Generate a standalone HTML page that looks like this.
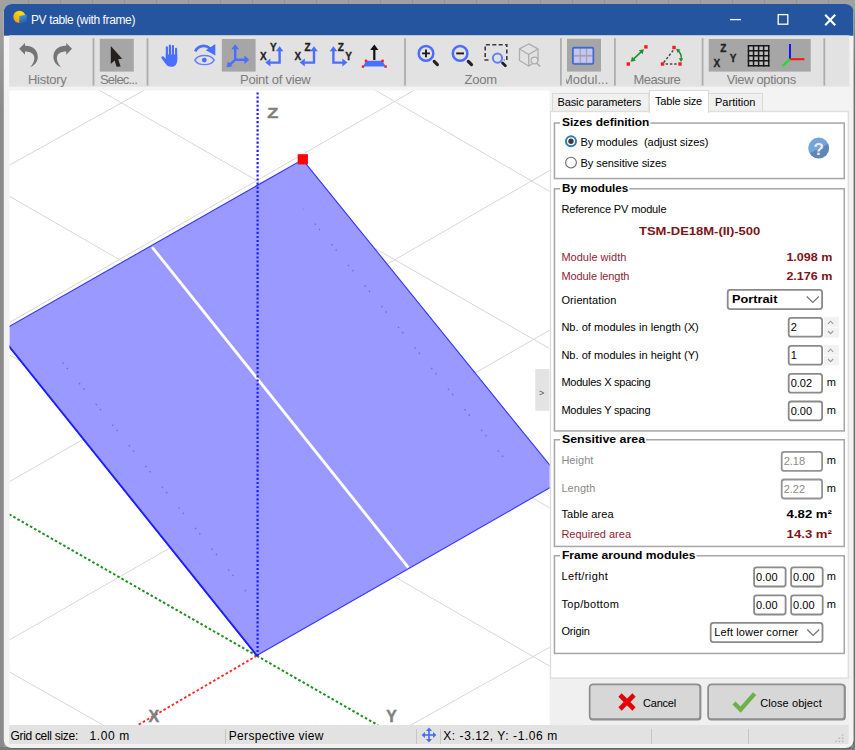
<!DOCTYPE html>
<html><head><meta charset="utf-8"><title>PV table (with frame)</title><style>
html,body{margin:0;padding:0;}
body{width:855px;height:750px;overflow:hidden;position:relative;background-color:#a1a1a1;
 background-image:linear-gradient(to right,transparent 0,transparent 28px,#939393 28px,#939393 29px,transparent 29px),
                  linear-gradient(to bottom,transparent 0,transparent 27px,#939393 27px,#939393 28px,transparent 28px);
 background-size:32.01px 100%,100% 20.53px;background-position:0 0,0 0;
 font-family:"Liberation Sans",sans-serif;}
.t{position:absolute;white-space:nowrap;line-height:1;}
svg{position:absolute;overflow:visible;}
</style></head><body>
<svg id="bg" style="left:0;top:0" width="855" height="750" viewBox="0 0 855 750">
<defs><linearGradient id="gl" x1="0" y1="0" x2="0" y2="1"><stop offset="0.03" stop-color="#000" stop-opacity="0"/><stop offset="0.15" stop-color="#000" stop-opacity=".14"/></linearGradient><linearGradient id="gr" x1="0" y1="0" x2="0" y2="1"><stop offset="0.015" stop-color="#000" stop-opacity="0"/><stop offset="0.095" stop-color="#000" stop-opacity=".25"/></linearGradient><linearGradient id="gh" x1="0.25" y1="0" x2="0.75" y2="1"><stop offset="0.52" stop-color="#74a4da"/><stop offset="0.52" stop-color="#5f87b6"/></linearGradient><clipPath id="wclip"><rect x="3.8" y="4" width="849.8" height="744.1" rx="8"/></clipPath></defs>
<rect x="0" y="0" width="4" height="750" fill="url(#gl)"/>
<rect x="853" y="0" width="2" height="750" fill="url(#gr)"/>
<rect x="0" y="747" width="855" height="3" fill="#7c7c7c"/>
<rect x="4.6" y="5" width="849.8" height="744.1" rx="8" fill="#000" opacity=".18"/>
<rect x="3.8" y="4" width="849.8" height="744.1" fill="#f3f3f3" rx="8"/>
<rect x="3.8" y="4" width="849.8" height="31.7" fill="#25559e" clip-path="url(#wclip)"/>
<rect x="9.2" y="35.3" width="840.2" height="51.3" fill="#e2e2e2"/>
<rect x="550" y="679" width="299" height="46" fill="#f0f0f0"/>
<rect x="9" y="725" width="839.7" height="19" fill="#e2e2e2"/>
<rect x="92.6" y="38.2" width="1.8" height="47.4" fill="#adadad"/>
<rect x="146.6" y="38.2" width="1.8" height="47.4" fill="#adadad"/>
<rect x="404.1" y="38.2" width="1.8" height="47.4" fill="#adadad"/>
<rect x="560" y="38.2" width="1.8" height="47.4" fill="#adadad"/>
<rect x="614" y="38.2" width="1.8" height="47.4" fill="#adadad"/>
<rect x="701.7" y="38.2" width="1.8" height="47.4" fill="#adadad"/>
<rect x="823.4" y="38.2" width="1.8" height="47.4" fill="#adadad"/>
<rect x="99.8" y="38.8" width="34" height="32.8" fill="#a6a6a6"/>
<rect x="221.8" y="39" width="33.8" height="32.6" fill="#a6a6a6"/>
<rect x="567" y="38.8" width="34" height="32.8" fill="#a6a6a6"/>
<rect x="708.7" y="39" width="102" height="32.6" fill="#a6a6a6"/>
<rect x="552.5" y="93.5" width="96.5" height="18" fill="#f0f0f0" stroke="#d9d9d9" stroke-width="1"/>
<rect x="708.5" y="93.5" width="54" height="18" fill="#f0f0f0" stroke="#d9d9d9" stroke-width="1"/>
<rect x="550.5" y="111.5" width="297.8" height="566.6" fill="#fff" stroke="#dedede" stroke-width="1.4"/>
<rect x="649.5" y="90.5" width="59" height="22" fill="#fff" stroke="#d9d9d9" stroke-width="1"/>
<rect x="650" y="110.5" width="58" height="3" fill="#fff"/>
<rect x="554.45" y="123.05" width="289.8" height="55.5" fill="none" stroke="#a6a6a6" stroke-width="1.5"/>
<rect x="560" y="118.3" width="90.4" height="8" fill="#fff"/>
<rect x="554.45" y="188.75" width="289.8" height="242.2" fill="none" stroke="#a6a6a6" stroke-width="1.5"/>
<rect x="560" y="184" width="69.4" height="8" fill="#fff"/>
<rect x="554.45" y="439.75" width="289.8" height="106.7" fill="none" stroke="#a6a6a6" stroke-width="1.5"/>
<rect x="560" y="435" width="86" height="8" fill="#fff"/>
<rect x="554.45" y="555.75" width="289.8" height="97.7" fill="none" stroke="#a6a6a6" stroke-width="1.5"/>
<rect x="560" y="551" width="136.5" height="8" fill="#fff"/>
<circle cx="571" cy="141.2" r="5" fill="#fff" stroke="#2f7ab8" stroke-width="2"/>
<circle cx="571" cy="141.2" r="2.7" fill="#3c3c3c"/>
<circle cx="571" cy="162.6" r="5.4" fill="#fff" stroke="#6a6a6a" stroke-width="1.1"/>
<circle cx="818.7" cy="148.1" r="10.5" fill="url(#gh)"/>
<rect x="727.7" y="289.9" width="94.4" height="19.2" fill="#fff" stroke="#8a8a8a" stroke-width="1.8" rx="2.5"/>
<path d="M806.8 296.5 l6 6 l6 -6" fill="none" stroke="#707070" stroke-width="1.1"/>
<rect x="788.7" y="317.9" width="33.4" height="18.8" fill="#fff" stroke="#8a8a8a" stroke-width="1.8" rx="2.5"/>
<rect x="788.7" y="345.9" width="33.4" height="18.8" fill="#fff" stroke="#8a8a8a" stroke-width="1.8" rx="2.5"/>
<rect x="824" y="317" width="15" height="10" fill="#f2f2f2"/>
<rect x="824" y="327.6" width="15" height="10" fill="#f2f2f2"/>
<path d="M828 323.8 l2.6 -2.6 l2.6 2.6 M828 331 l2.6 2.6 l2.6 -2.6" fill="none" stroke="#9a9a9a" stroke-width="1.1"/>
<rect x="824" y="345" width="15" height="10" fill="#f2f2f2"/>
<rect x="824" y="355.6" width="15" height="10" fill="#f2f2f2"/>
<path d="M828 351.8 l2.6 -2.6 l2.6 2.6 M828 359 l2.6 2.6 l2.6 -2.6" fill="none" stroke="#9a9a9a" stroke-width="1.1"/>
<rect x="788.7" y="373.9" width="33.4" height="18.8" fill="#fff" stroke="#8a8a8a" stroke-width="1.8" rx="2.5"/>
<rect x="788.7" y="401.5" width="33.4" height="18.8" fill="#fff" stroke="#8a8a8a" stroke-width="1.8" rx="2.5"/>
<rect x="781.7" y="451.9" width="40.4" height="19" fill="#fff" stroke="#939393" stroke-width="1.8" rx="2.5"/>
<rect x="781.7" y="479.5" width="40.4" height="19" fill="#fff" stroke="#939393" stroke-width="1.8" rx="2.5"/>
<rect x="754.1" y="567.3" width="31.5" height="19.2" fill="#fff" stroke="#8a8a8a" stroke-width="1.8" rx="2.5"/>
<rect x="791.1" y="567.3" width="31.6" height="19.2" fill="#fff" stroke="#8a8a8a" stroke-width="1.8" rx="2.5"/>
<rect x="754.1" y="595.3" width="31.5" height="19.2" fill="#fff" stroke="#8a8a8a" stroke-width="1.8" rx="2.5"/>
<rect x="791.1" y="595.3" width="31.6" height="19.2" fill="#fff" stroke="#8a8a8a" stroke-width="1.8" rx="2.5"/>
<rect x="710.7" y="622.9" width="111.8" height="19.2" fill="#fff" stroke="#8a8a8a" stroke-width="1.8" rx="2.5"/>
<path d="M807.2 629.5 l6 6 l6 -6" fill="none" stroke="#707070" stroke-width="1.1"/>
<rect x="589.2" y="684.1" width="112.2" height="36.4" fill="#8c8c8c" rx="3.5"/>
<rect x="589.65" y="684.45" width="110.5" height="34.7" fill="#d7d7d7" stroke="#8e8e8e" stroke-width="1.7" rx="3.5"/>
<rect x="707.7" y="684.1" width="138.1" height="36.4" fill="#8c8c8c" rx="3.5"/>
<rect x="708.15" y="684.45" width="136.4" height="34.7" fill="#d7d7d7" stroke="#8e8e8e" stroke-width="1.7" rx="3.5"/>
<path d="M620 695 L634 709 M634 695 L620 709" stroke="#e40000" stroke-width="4.6" fill="none"/>
<path d="M734 703 L740.6 709.6 L754.6 693.6" stroke="#6db248" stroke-width="4.4" fill="none"/>
<rect x="225" y="729" width="1" height="15" fill="#c6c6c6"/>
<rect x="416" y="729" width="1" height="15" fill="#c6c6c6"/>
<rect x="440" y="729" width="1" height="15" fill="#c6c6c6"/>
<rect x="651" y="729" width="1" height="15" fill="#c6c6c6"/>
<rect x="748" y="729" width="1" height="15" fill="#c6c6c6"/>
</svg>
<svg id="cv" style="left:9px;top:90px;overflow:hidden" width="541" height="635" viewBox="9 90 541 635">
<rect x="9.6" y="90.5" width="540" height="634.5" fill="#fff"/>
<clipPath id="cvclip"><rect x="9.6" y="90.5" width="540" height="634.5"/></clipPath>
<g clip-path="url(#cvclip)">
<g stroke="#d6d6d6" stroke-width="1" fill="none">
<path d="M368 86 L550 191.7"/>
<path d="M92 86 L549.3 348.4"/>
<path d="M9 196 L550 508"/>
<path d="M9 354.5 L553 668"/>
<path d="M9 671.7 L104 725.6"/>
<path d="M9 165.4 L150 87"/>
<path d="M9 322.8 L420 86.9"/>
<path d="M9 482 L550 170.3"/>
<path d="M9 640.2 L550 330"/>
<path d="M553 645.4 L410 725.5"/>
</g>
<path d="M256.8 655.8 L9 514.2" stroke="#1f8f1f" stroke-width="2" stroke-dasharray="2.6 2.19" fill="none"/>
<path d="M256.8 655.8 L378 725.2" stroke="#1f8f1f" stroke-width="2" stroke-dasharray="2.6 2.19" fill="none"/>
<path d="M256.8 655.8 L138 725" stroke="#ff2a2a" stroke-width="1.9" stroke-dasharray="2.6 2.19" fill="none"/>
<polygon points="302.6,159.6 562.3,480.7 256.8,655.5 -1.8,332.8" fill="#9999ff" stroke="#3535ff" stroke-width="1.1"/>
<path d="M256.8 655.5 L-1.8 332.8" stroke="#1f1fff" stroke-width="1.9" fill="none"/>
<path d="M152 247 L408.4 567.6" stroke="#fff" stroke-width="2.8" fill="none"/>
<path d="M503.1 456.9 L303 209" stroke="#4a4aff" stroke-width="1.3" stroke-dasharray="1.5 5.3 1.5 18.2" fill="none" opacity=".6"/>
<path d="M62.6 362.5 L248.5 594.6" stroke="#4a4aff" stroke-width="1.3" stroke-dasharray="1.5 5.3 1.5 18.2" fill="none" opacity=".6"/>
<path d="M257.6 92.4 L257.6 656" stroke="#1d1dff" stroke-width="2.2" stroke-dasharray="2.1 2" fill="none"/>
<rect x="297.7" y="154.2" width="10.2" height="10.2" fill="#ff0000"/>
<text transform="translate(267.3,118) scale(1.18,0.96)" font-family="Liberation Sans, sans-serif" font-weight="bold" font-size="15.4" fill="#808080" stroke="#808080" stroke-width=".4">Z</text>
<text transform="translate(148.6,721.7) scale(1.02,1)" font-family="Liberation Sans, sans-serif" font-weight="bold" font-size="15.8" fill="#808080" stroke="#808080" stroke-width=".4">X</text>
<text transform="translate(386.3,721.7) scale(1,1)" font-family="Liberation Sans, sans-serif" font-weight="bold" font-size="15.8" fill="#808080" stroke="#808080" stroke-width=".4">Y</text>
</g>
<rect x="535.3" y="369" width="14.2" height="41.8" fill="#e3e3e3"/>
</svg>

<svg id="ic" style="left:0;top:0;pointer-events:none" width="855" height="750" viewBox="0 0 855 750">
<!-- title icon -->
<linearGradient id="sun" x1="0.8" y1="0.1" x2="0.2" y2="0.95"><stop offset="0.2" stop-color="#ffd60a"/><stop offset="1" stop-color="#f79b10"/></linearGradient>
<linearGradient id="pan" x1="0.3" y1="0" x2="0.7" y2="1"><stop offset="0" stop-color="#3f9fe0"/><stop offset="0.75" stop-color="#2a6ab4"/><stop offset="1" stop-color="#265aa4"/></linearGradient>
<circle cx="19.4" cy="16.9" r="6.1" fill="url(#sun)"/>
<path d="M19.2 16 L26.9 14.6 L26.9 21.8 L19.2 23.2 Z" fill="url(#pan)"/>
<!-- window controls -->
<path d="M730 19.6 H741" stroke="#fff" stroke-width="1.3"/>
<rect x="778.2" y="14.6" width="9.6" height="9.6" fill="none" stroke="#fff" stroke-width="1.3"/>
<path d="M825.2 14.8 L835.2 25.2 M835.2 14.8 L825.2 25.2" stroke="#fff" stroke-width="2.1"/>
<!-- history -->
<path d="M19.2 48.8 L25 43 L25 45.7 C32.5 45.5 38 50 37.8 57 C37.6 62 34.5 65.6 30 67.3 C33.4 63.8 34.8 60.2 34.2 57 C33.5 53.4 30.5 51.7 25 51.6 L25 54.8 Z" fill="#757575"/>
<path d="M19.2 48.8 L25 43 L25 45.7 C32.5 45.5 38 50 37.8 57 C37.6 62 34.5 65.6 30 67.3 C33.4 63.8 34.8 60.2 34.2 57 C33.5 53.4 30.5 51.7 25 51.6 L25 54.8 Z" fill="#757575" transform="translate(91.2,0) scale(-1,1)"/>
<!-- select cursor -->
<path d="M110.8 46 L110.8 64 L114.6 60.6 L116.6 66.8 L120.6 66.4 L118.2 59.2 L122.2 58.8 Z" fill="#25221d"/>
<!-- hand -->
<g fill="#4a6eff">
<rect x="165.8" y="46.2" width="2.2" height="13" rx="1.1"/>
<rect x="168.8" y="44.4" width="2.2" height="15" rx="1.1"/>
<rect x="171.8" y="45" width="2.2" height="15" rx="1.1"/>
<rect x="175" y="47.8" width="2.2" height="13" rx="1.1"/>
<path d="M165.8 54.6 H177.2 V60 C177.2 64.8 174.6 66.8 171.4 66.8 C168.4 66.8 166.8 65.6 165.2 63.2 L161.5 58.2 C160.8 56.8 162.6 55.6 163.8 56.8 L165.8 59 Z"/>
</g>
<!-- eye / rotate -->
<g fill="none" stroke="#4a6eff">
<path d="M194.8 60.1 C198.4 54 210.6 54 214.2 60.1 C210.6 66.2 198.4 66.2 194.8 60.1 Z" stroke-width="1.4" stroke-opacity=".85"/>
<path d="M195.2 51.4 C198 45.2 205.6 44.4 210 48.6" stroke-width="2.7"/>
</g>
<circle cx="204.3" cy="60.1" r="2.4" fill="#4a6eff"/>
<path d="M215.3 44.1 L215.3 55.6 L205.9 50.3 Z" fill="#4a6eff"/>
<!-- 3d axes -->
<g stroke="#4a6eff" stroke-width="2.4" fill="none">
<path d="M235.2 48 V59.8 H245.5 M235.2 59.8 L229.5 64.8"/>
</g>
<g fill="#4a6eff">
<path d="M235.2 44.2 L239 49.2 H231.4 Z"/>
<path d="M249.2 59.8 L244.4 55.6 V64 Z"/>
<path d="M226.6 67.2 L228 61.6 L232.6 66.2 Z"/>
</g>
<!-- XY -->
<g>
<path d="M279.6 50 V62.6 H270" stroke="#4a6eff" stroke-width="2.4" fill="none"/>
<path d="M279.6 46.2 L283.4 51.2 H275.8 Z" fill="#4a6eff"/>
<path d="M265.3 62.6 L270.4 58.6 V66.6 Z" fill="#4a6eff"/>
</g>
<g transform="translate(34.4,0)">
<path d="M279.6 50 V62.6 H270" stroke="#4a6eff" stroke-width="2.4" fill="none"/>
<path d="M279.6 46.2 L283.4 51.2 H275.8 Z" fill="#4a6eff"/>
<path d="M265.3 62.6 L270.4 58.6 V66.6 Z" fill="#4a6eff"/>
</g>
<!-- ZY -->
<path d="M333.4 50 V62.6 H343" stroke="#4a6eff" stroke-width="2.4" fill="none"/>
<path d="M333.4 46.2 L337.2 51.2 H329.6 Z" fill="#4a6eff"/>
<path d="M347.4 62.6 L342.4 58.6 V66.6 Z" fill="#4a6eff"/>
<g font-family="Liberation Sans, sans-serif" font-weight="bold" font-size="10" fill="#222" stroke="#222" stroke-width=".3">
<text x="260" y="60">X</text><text x="270" y="51.4">Y</text>
<text x="294.4" y="60">X</text><text x="304.6" y="51.4">Z</text>
<text x="337.8" y="51">Z</text><text x="345.3" y="60.4">Y</text>
<text x="720.2" y="51.8">Z</text><text x="729.8" y="61.8">Y</text><text x="713.4" y="66.8">X</text>
</g>
<!-- top view -->
<path d="M374.3 49 V60" stroke="#111" stroke-width="2.2"/>
<path d="M374.3 44.4 L378.4 50 H370.2 Z" fill="#111"/>
<path d="M366 60.8 H382.6 L385.6 66.6 H363 Z" fill="#4a6eff"/>
<g fill="#ff1a1a"><rect x="364.8" y="59.6" width="2.4" height="2.4"/><rect x="381.4" y="59.6" width="2.4" height="2.4"/><rect x="361.8" y="65.4" width="2.4" height="2.4"/><rect x="384.4" y="65.4" width="2.4" height="2.4"/></g>
<!-- zoom in/out -->
<g fill="none">
<circle cx="426" cy="53.4" r="7.3" stroke="#4c6bff" stroke-width="2.5"/>
<path d="M422.1 53.4 H429.9 M426 49.5 V57.3" stroke="#1c1a17" stroke-width="1.9"/>
<path d="M434.2 61.4 L437.4 64.6" stroke="#26221c" stroke-width="3.2" stroke-linecap="round"/>
<circle cx="460.1" cy="53.4" r="7.3" stroke="#4c6bff" stroke-width="2.5"/>
<path d="M456.2 53.4 H464" stroke="#1c1a17" stroke-width="1.9"/>
<path d="M468.3 61.4 L471.5 64.6" stroke="#26221c" stroke-width="3.2" stroke-linecap="round"/>
<path d="M488.5 60 H485.2 V44.8 H506.8 V60 H503.8" stroke="#3a3a3a" stroke-width="1.6" stroke-dasharray="4 2.4"/>
<circle cx="497.5" cy="58.1" r="4.6" stroke="#5f7dff" stroke-width="2" fill="#e2e2e2"/>
<path d="M502.6 63 L505.4 65.8" stroke="#222" stroke-width="2.8" stroke-linecap="round"/>
</g>
<!-- cube (disabled) -->
<g fill="none" stroke="#adadad" stroke-width="1.3">
<path d="M528.7 43.9 L538 49 V60.5 L528.7 66 L519.5 60.5 V49 Z"/>
<path d="M519.5 49 L528.7 54.5 L538 49 M528.7 54.5 V66"/>
<circle cx="534.5" cy="60.5" r="3.4" fill="#e3e3e3"/>
<path d="M537 63.2 L540 66.4" stroke-width="1.6"/>
</g>
<!-- module -->
<rect x="572.8" y="47.6" width="20.6" height="16.4" rx="1.4" fill="#a6a6a6" stroke="#3a68d8" stroke-width="1.6"/>
<g fill="#c4c4ff">
<rect x="574.1" y="48.9" width="5.5" height="5.9"/><rect x="580.9" y="48.9" width="5" height="5.9"/><rect x="587.2" y="48.9" width="5" height="5.9"/>
<rect x="574.1" y="56.7" width="5.5" height="5.9"/><rect x="580.9" y="56.7" width="5" height="5.9"/><rect x="587.2" y="56.7" width="5" height="5.9"/>
</g>
<!-- measure -->
<g fill="#ff1a1a">
<rect x="644.2" y="45.2" width="3.4" height="3.4"/><rect x="626.6" y="62.3" width="3.4" height="3.4"/>
<rect x="672.3" y="45.8" width="3.4" height="3.4"/><rect x="660.8" y="62.3" width="3.4" height="3.4"/><rect x="678.3" y="62.3" width="3.4" height="3.4"/>
</g>
<path d="M633 59.6 L641.6 51.4" stroke="#1f8f33" stroke-width="1.6"/>
<path d="M630.6 61.8 L632 56.8 L635.8 60.8 Z M644 49.2 L642.6 54.2 L638.8 50.2 Z" fill="#1f8f33"/>
<path d="M673.2 50.4 L663.6 62.6 M665.6 64 H678" stroke="#4a4a4a" stroke-width="1.5" stroke-dasharray="2.4 1.9" fill="none"/>
<path d="M677.4 50.2 C680.4 52.4 681.6 56 681.2 59.4" stroke="#1f8f33" stroke-width="1.5" fill="none"/>
<path d="M676 48.8 L680.4 49.6 L677.6 53 Z M681 62 L678.8 58.2 L683.2 58.6 Z" fill="#1f8f33"/>
<!-- view options -->
<rect x="748.5" y="45.7" width="20.2" height="20.1" fill="#bdbdbd"/>
<g stroke="#161616" stroke-width="1.5" fill="none">
<path d="M748.5 45 V66.5 M753.55 45 V66.5 M758.6 45 V66.5 M763.65 45 V66.5 M768.7 45 V66.5"/>
<path d="M747.8 45.7 H769.4 M747.8 50.7 H769.4 M747.8 55.75 H769.4 M747.8 60.8 H769.4 M747.8 65.8 H769.4"/>
</g>
<path d="M790 44 V59.2" stroke="#1414ff" stroke-width="2"/>
<path d="M790 59.2 H804.4" stroke="#ff1414" stroke-width="2"/>
<path d="M790 59.2 L782.6 66" stroke="#1fe01f" stroke-width="2.3"/>
<!-- status icon -->
<g fill="#4a6cf0" stroke="none">
<path d="M429 727.6 L432 731 H426 Z M429 742.4 L432 739 H426 Z M421.6 735 L425 732 V738 Z M436.4 735 L433 732 V738 Z"/>
<rect x="428.2" y="730" width="1.6" height="10"/><rect x="424" y="734.2" width="10" height="1.6"/>
</g>
<!-- grip -->
<g fill="#bdbdbd">
<rect x="841.8" y="734.2" width="1.6" height="1.6"/>
<rect x="838.6" y="737.4" width="1.6" height="1.6"/><rect x="841.8" y="737.4" width="1.6" height="1.6"/>
<rect x="835.4" y="740.6" width="1.6" height="1.6"/><rect x="838.6" y="740.6" width="1.6" height="1.6"/><rect x="841.8" y="740.6" width="1.6" height="1.6"/>
</g>
</svg>

<div style="position:absolute;left:566px;top:70px;width:44px;height:18px;overflow:hidden;"><span class="t" style="left:-4px;top:3.40px;font-size:13px;color:#7c7c7c;">Modul...</span></div>
<span class="t" id="t1" style="top:73.40px;font-size:13px;color:#7c7c7c;letter-spacing:-0.293px;left:28.00px;">History</span>
<span class="t" id="t2" style="top:73.40px;font-size:13px;color:#7c7c7c;letter-spacing:-0.800px;left:100.00px;">Selec...</span>
<span class="t" id="t3" style="top:73.40px;font-size:13px;color:#7c7c7c;letter-spacing:-0.246px;left:240.00px;">Point of view</span>
<span class="t" id="t4" style="top:73.40px;font-size:13px;color:#7c7c7c;letter-spacing:-0.234px;left:464.50px;">Zoom</span>
<span class="t" id="t5" style="top:73.40px;font-size:13px;color:#7c7c7c;letter-spacing:-0.583px;left:633.60px;">Measure</span>
<span class="t" id="t6" style="top:73.40px;font-size:13px;color:#7c7c7c;letter-spacing:-0.374px;left:726.80px;">View options</span>
<span class="t" id="t7" style="top:14.14px;font-size:12px;color:#fbfbff;letter-spacing:-0.383px;left:31.00px;">PV table (with frame)</span>
<span class="t" id="t8" style="top:96.69px;font-size:11px;color:#000;letter-spacing:-0.125px;left:557.50px;">Basic parameters</span>
<span class="t" id="t9" style="top:95.69px;font-size:11px;color:#000;letter-spacing:-0.192px;left:655.00px;">Table size</span>
<span class="t" id="t10" style="top:96.69px;font-size:11px;color:#000;letter-spacing:0.016px;left:715.00px;">Partition</span>
<span class="t" id="t11" style="top:116.99px;font-size:11px;color:#000;font-weight:bold;left:562.00px;transform:scaleX(1.0832);transform-origin:0 50%;">Sizes definition</span>
<span class="t" id="t12" style="top:182.69px;font-size:11px;color:#000;font-weight:bold;left:562.00px;transform:scaleX(1.0648);transform-origin:0 50%;">By modules</span>
<span class="t" id="t13" style="top:433.69px;font-size:11px;color:#000;font-weight:bold;left:562.00px;transform:scaleX(1.1216);transform-origin:0 50%;">Sensitive area</span>
<span class="t" id="t14" style="top:549.69px;font-size:11px;color:#000;font-weight:bold;left:562.00px;transform:scaleX(1.0975);transform-origin:0 50%;">Frame around modules</span>
<span class="t" id="t15" style="top:136.69px;font-size:11px;color:#000;letter-spacing:-0.015px;left:580.50px;white-space:pre;">By modules  (adjust sizes)</span>
<span class="t" id="t16" style="top:158.19px;font-size:11px;color:#000;letter-spacing:-0.045px;left:580.50px;">By sensitive sizes</span>
<span class="t" id="t17" style="top:140.61px;font-size:17px;color:#ececec;font-weight:bold;left:818.60px;transform:translateX(-50%);">?</span>
<span class="t" id="t18" style="top:203.69px;font-size:11px;color:#000;letter-spacing:-0.138px;left:561.40px;">Reference PV module</span>
<span class="t" id="t19" style="top:225.69px;font-size:11px;color:#7d1418;font-weight:bold;left:638.70px;transform:scaleX(1.1813);transform-origin:0 50%;">TSM-DE18M-(II)-500</span>
<span class="t" id="t20" style="top:251.69px;font-size:11px;color:#8f1d38;letter-spacing:0.014px;left:561.40px;">Module width</span>
<span class="t" id="t21" style="top:251.69px;font-size:11px;color:#7d1418;font-weight:bold;right:22.80px;transform:scaleX(1.1393);transform-origin:100% 50%;">1.098 m</span>
<span class="t" id="t22" style="top:271.29px;font-size:11px;color:#8f1d38;letter-spacing:-0.085px;left:561.40px;">Module length</span>
<span class="t" id="t23" style="top:271.29px;font-size:11px;color:#7d1418;font-weight:bold;right:22.80px;transform:scaleX(1.1393);transform-origin:100% 50%;">2.176 m</span>
<span class="t" id="t24" style="top:295.19px;font-size:11px;color:#000;letter-spacing:0.108px;left:561.40px;">Orientation</span>
<span class="t" id="t25" style="top:294.19px;font-size:11px;color:#000;font-weight:bold;left:732.10px;transform:scaleX(1.1604);transform-origin:0 50%;">Portrait</span>
<span class="t" id="t26" style="top:321.69px;font-size:11px;color:#000;letter-spacing:0.037px;left:561.40px;">Nb. of modules in length (X)</span>
<span class="t" id="t27" style="top:322.09px;font-size:11px;color:#000;left:790.70px;">2</span>
<span class="t" id="t28" style="top:349.69px;font-size:11px;color:#000;letter-spacing:0.037px;left:561.40px;">Nb. of modules in height (Y)</span>
<span class="t" id="t29" style="top:350.09px;font-size:11px;color:#000;left:790.70px;">1</span>
<span class="t" id="t30" style="top:377.29px;font-size:11px;color:#000;letter-spacing:-0.233px;left:561.40px;">Modules X spacing</span>
<span class="t" id="t31" style="top:378.09px;font-size:11px;color:#000;left:790.70px;">0.02</span>
<span class="t" id="t32" style="top:376.69px;font-size:11px;color:#000;left:826.70px;">m</span>
<span class="t" id="t33" style="top:404.69px;font-size:11px;color:#000;letter-spacing:-0.209px;left:561.40px;">Modules Y spacing</span>
<span class="t" id="t34" style="top:405.69px;font-size:11px;color:#000;left:790.70px;">0.00</span>
<span class="t" id="t35" style="top:404.69px;font-size:11px;color:#000;left:826.70px;">m</span>
<span class="t" id="t36" style="top:455.19px;font-size:11px;color:#8a8a8a;letter-spacing:0.034px;left:561.40px;">Height</span>
<span class="t" id="t37" style="top:456.19px;font-size:11px;color:#8a8a8a;left:783.70px;">2.18</span>
<span class="t" id="t38" style="top:455.19px;font-size:11px;color:#000;left:826.70px;">m</span>
<span class="t" id="t39" style="top:482.69px;font-size:11px;color:#8a8a8a;letter-spacing:0.057px;left:561.40px;">Length</span>
<span class="t" id="t40" style="top:483.79px;font-size:11px;color:#8a8a8a;left:783.70px;">2.22</span>
<span class="t" id="t41" style="top:482.69px;font-size:11px;color:#000;left:826.70px;">m</span>
<span class="t" id="t42" style="top:508.69px;font-size:11px;color:#000;letter-spacing:0.092px;left:561.40px;">Table area</span>
<span class="t" id="t43" style="top:508.69px;font-size:11px;color:#000;font-weight:bold;right:22.80px;transform:scaleX(1.1946);transform-origin:100% 50%;">4.82 m²</span>
<span class="t" id="t44" style="top:528.69px;font-size:11px;color:#8f1d38;letter-spacing:-0.009px;left:561.40px;">Required area</span>
<span class="t" id="t45" style="top:528.69px;font-size:11px;color:#7d1418;font-weight:bold;right:22.80px;transform:scaleX(1.1946);transform-origin:100% 50%;">14.3 m²</span>
<span class="t" id="t46" style="top:571.29px;font-size:11px;color:#000;letter-spacing:0.399px;left:561.40px;">Left/right</span>
<span class="t" id="t47" style="top:571.69px;font-size:11px;color:#000;left:756.10px;">0.00</span>
<span class="t" id="t48" style="top:571.69px;font-size:11px;color:#000;left:793.10px;">0.00</span>
<span class="t" id="t49" style="top:571.29px;font-size:11px;color:#000;left:826.70px;">m</span>
<span class="t" id="t50" style="top:599.39px;font-size:11px;color:#000;letter-spacing:0.338px;left:561.40px;">Top/bottom</span>
<span class="t" id="t51" style="top:599.69px;font-size:11px;color:#000;left:756.10px;">0.00</span>
<span class="t" id="t52" style="top:599.69px;font-size:11px;color:#000;left:793.10px;">0.00</span>
<span class="t" id="t53" style="top:599.39px;font-size:11px;color:#000;left:826.70px;">m</span>
<span class="t" id="t54" style="top:626.19px;font-size:11px;color:#000;letter-spacing:-0.174px;left:561.40px;">Origin</span>
<span class="t" id="t55" style="top:627.19px;font-size:11px;color:#000;letter-spacing:0.121px;left:714.30px;">Left lower corner</span>
<span class="t" id="t56" style="top:698.49px;font-size:11px;color:#000;letter-spacing:-0.208px;left:643.00px;">Cancel</span>
<span class="t" id="t57" style="top:698.49px;font-size:11px;color:#000;letter-spacing:0.079px;left:760.30px;">Close object</span>
<span class="t" id="t58" style="top:388.88px;font-size:9px;color:#555;left:539.00px;">&gt;</span>
<span class="t" id="t59" style="top:730.14px;font-size:12px;color:#000;letter-spacing:-0.295px;left:10.40px;">Grid cell size:</span>
<span class="t" id="t60" style="top:730.14px;font-size:12px;color:#000;letter-spacing:0.585px;left:89.60px;">1.00 m</span>
<span class="t" id="t61" style="top:730.14px;font-size:12px;color:#000;letter-spacing:0.310px;left:228.80px;">Perspective view</span>
<span class="t" id="t62" style="top:730.14px;font-size:12px;color:#000;letter-spacing:0.571px;left:443.20px;">X: -3.12, Y: -1.06 m</span>
</body></html>
